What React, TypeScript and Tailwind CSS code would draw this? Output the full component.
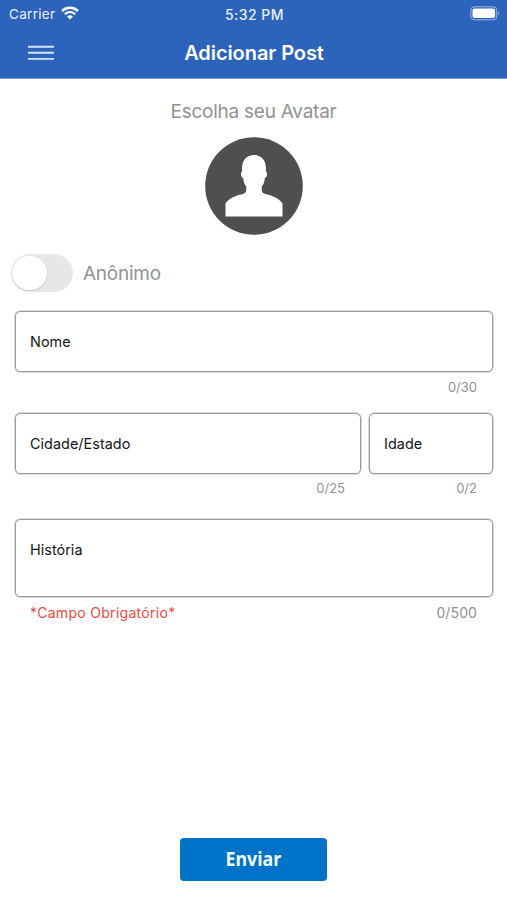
import React from "react";

function StatusBar() {
  return (
    <div className="flex h-[29px] items-center justify-between pl-[9px] pr-[7px] text-[#e8f0ff]">
      <div className="flex w-[120px] items-center gap-[6px]">
        <span className="text-[13.5px] leading-none tracking-[0.3px]">Carrier</span>
        <svg className="-mt-[3px]" width="18" height="14" viewBox="0 0 18 14" fill="none" stroke="white">
          <path d="M1 5C5.6.8 12.4.8 17 5" strokeWidth="2.5" />
          <path d="M3.9 8.2c3-2.8 7.2-2.8 10.2 0" strokeWidth="2.2" />
          <path d="M9 13.4 6.1 10.5c1.7-1.6 4.1-1.6 5.8 0Z" fill="white" stroke="none" />
        </svg>
      </div>
      <span className="text-[14px] font-medium leading-none tracking-[0.45px]">5:32 PM</span>
      <div className="flex w-[120px] justify-end">
        <svg className="-mt-[2px]" width="30" height="15" viewBox="0 0 30 15">
          <rect x=".8" y=".8" width="26" height="13" rx="3.6" fill="none" stroke="#a0b9e4" strokeWidth="1" />
          <rect x="2.5" y="2.5" width="22.6" height="9.6" rx="2" fill="white" />
          <path d="M28.3 5.2q1.8 2.1 0 4.2Z" fill="#a0b9e4" />
        </svg>
      </div>
    </div>
  );
}

function Avatar() {
  return (
    <svg className="mt-[13px] block" width="98" height="98" viewBox="0 0 98 98">
      <circle cx="49" cy="49" r="48.8" fill="#4f4f4f" />
      <path
        d="M20.5 79.5V66.500c3-5 10-8 16.500-9.300 3-.7 4.200-1.700 4.200-3.700V49.500c-1.700-2-2.700-4.800-3-8.200-1.500-.5-2.400-2.600-2.200-4.800.1-1 .5-1.700 1.100-1.900v-4.400C37.100 23.300 42 18 49 18s11.900 5.300 11.900 12.200v4.400c.6.200 1 .9 1.100 1.900.2 2.200-.7 4.300-2.200 4.800-.3 3.400-1.300 6.200-3 8.200v4c0 2 1.200 3 4.200 3.700C67.500 58.500 74.500 61.500 77.500 66.500v13Z"
        fill="white"
      />
    </svg>
  );
}

function Field({ label, className }: { label: string; className: string }) {
  return (
    <div className={`rounded-[5px] border border-[#9c9c9c] pl-[14px] text-[14.4px] leading-[18px] tracking-[0.04px] text-[#151515] shadow-[0_0_0_0.5px_#b4b4b4] ${className}`}>
      {label}
    </div>
  );
}

export default function App() {
  return (
    <main className="flex h-[900px] w-[507px] flex-col bg-white font-['Inter',sans-serif]">
      <header className="h-[79px] border-b border-[#7a9fd8] bg-[#2d64bb]">
        <StatusBar />
        <div className="flex h-[47px] items-center justify-between px-[28px]">
          <svg width="26" height="16" viewBox="0 0 26 16" stroke="#d6e4ff" strokeWidth="1.9">
            <path d="M0 1.700h26M0 7.700h26M0 13.900h26" />
          </svg>
          <h1 className="pl-px text-[20px] font-semibold leading-none tracking-[-0.07px] text-white">Adicionar Post</h1>
          <div className="w-[26px]" />
        </div>
      </header>

      <section className="flex flex-col items-center pt-[21px]">
        <h2 className="text-[19px] leading-6 tracking-[-0.25px] text-[#929292]">Escolha seu Avatar</h2>
        <Avatar />
      </section>

      <div className="mt-[19px] flex h-[38px] items-center gap-[10px] pl-[11px]">
        <div className="flex h-[38px] w-[62px] items-center rounded-full bg-[#e7e7e7] pl-px">
          <div className="h-[34px] w-[35px] rounded-full bg-white shadow-[0_1px_2px_rgba(0,0,0,0.14)]" />
        </div>
        <span className="pt-[2px] text-[19px] leading-6 tracking-[-0.25px] text-[#929292]">Anônimo</span>
      </div>

      <form className="flex flex-col pl-[15px] pr-[14px] pt-[19px] text-[13px]">
        <Field label="Nome" className="h-[61px] pt-[21px]" />
        <div className="mt-[6px] pr-[16px] text-right leading-[18px] text-[#929292]">0/30</div>
        <div className="mt-[17px] flex gap-[8px]">
          <div className="w-[346px]">
            <Field label="Cidade/Estado" className="h-[61px] pt-[21px]" />
            <div className="mt-[5px] pr-[16px] text-right leading-[18px] text-[#929292]">0/25</div>
          </div>
          <div className="w-[124px]">
            <Field label="Idade" className="h-[61px] pt-[21px]" />
            <div className="mt-[5px] pr-[16px] text-right leading-[18px] text-[#929292]">0/2</div>
          </div>
        </div>
        <Field label="História" className="mt-[22px] h-[78px] pt-[21px]" />
        <div className="mt-[7px] flex justify-between pl-[15px] pr-[16px] text-[14px] leading-[18px]">
          <span className="tracking-[0.3px] text-[#f24840]">*Campo Obrigatório*</span>
          <span className="tracking-[0.1px] text-[#929292]">0/500</span>
        </div>
      </form>

      <button className="mb-[19px] mt-auto flex h-[43px] w-[147px] items-center justify-center self-center rounded-[4px] bg-[#0072c8] font-['Noto_Sans',sans-serif] text-[20px] font-bold leading-none text-[#effaff]">
        <span className="-mt-[2px] scale-x-[0.89]">Enviar</span>
      </button>
    </main>
  );
}
